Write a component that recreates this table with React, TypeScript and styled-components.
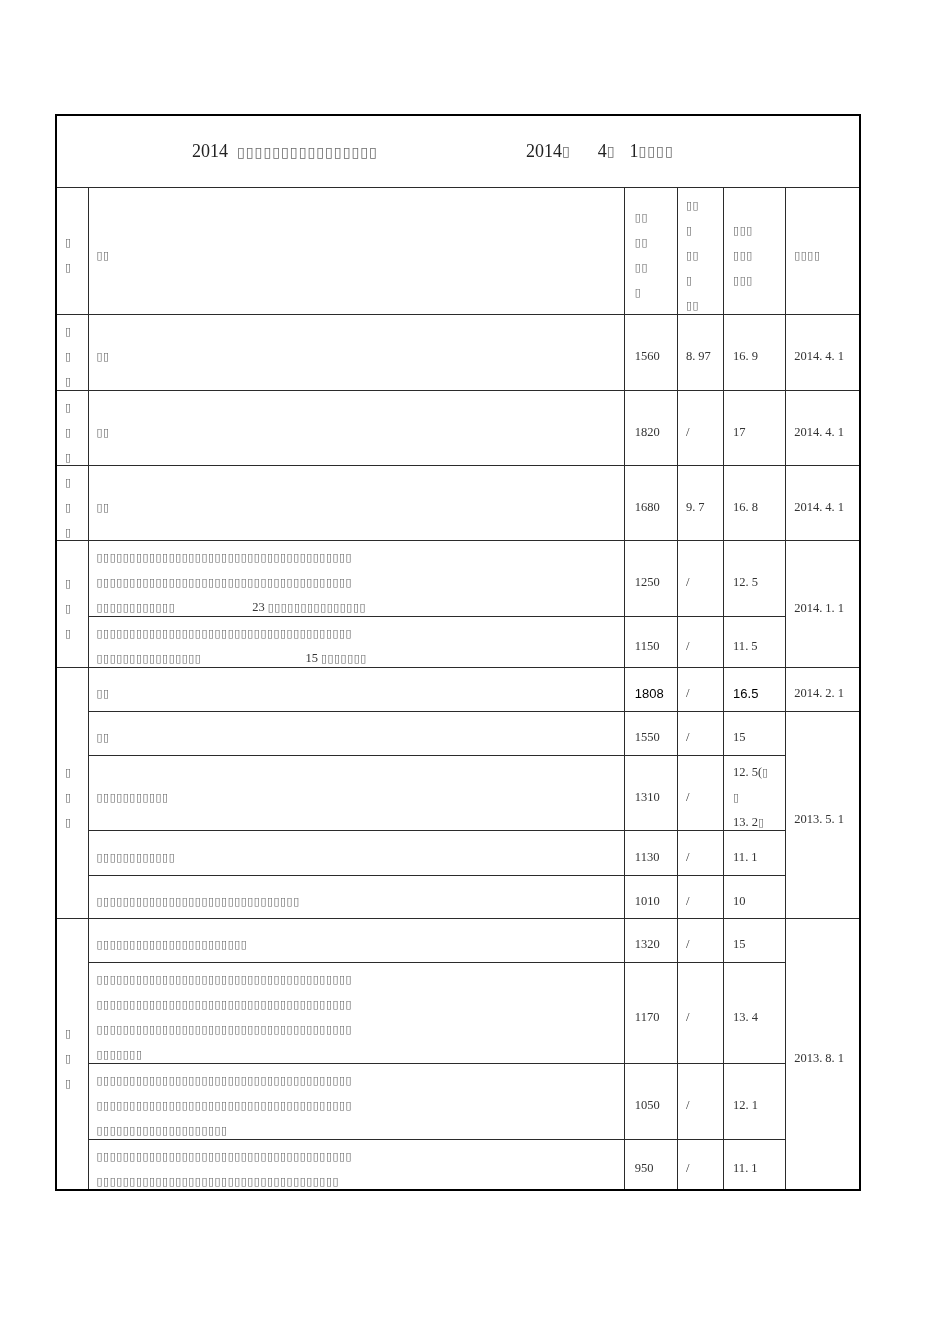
import React from 'react';
import styled, { createGlobalStyle } from 'styled-components';

const GlobalStyle = createGlobalStyle`
  html, body {
    margin: 0;
    padding: 0;
    background: #fff;
  }
  body {
    font-family: "Liberation Serif", "DejaVu Serif", serif;
    color: #333;
  }
`;

const Page = styled.div`
  width: 950px;
  min-height: 1344px;
  box-sizing: border-box;
  padding: 114px 0 0 55px;
  filter: grayscale(100%);
`;

const Sheet = styled.table`
  width: 806px;
  table-layout: fixed;
  border-collapse: collapse;
  border: 2px solid #000;
`;

const Row = styled.tr<{ $h: number }>`
  height: ${({ $h }) => $h}px;
`;

const Cell = styled.td<{ $pl?: number }>`
  border: 1px solid #2b2b2b;
  padding: 0 0 0 ${({ $pl }) => $pl ?? 8}px;
  vertical-align: middle;
  font-size: 12px;
  white-space: nowrap;
`;

const Lines = styled.div<{ $lh?: number }>`
  padding-top: 4px;
  margin-bottom: -5px;
  line-height: ${({ $lh }) => $lh ?? 25}px;
`;

const TitleBar = styled.div`
  display: flex;
  align-items: center;
  padding-left: 135px;
  font-size: 18px;
  color: #222;
`;

const TitleDate = styled.span`
  margin-left: 148px;
  display: inline-flex;
  align-items: center;
`;

const Tofu = styled.span<{ $big?: boolean }>`
  font-family: "DejaVu Sans", sans-serif;
  font-size: ${({ $big }) => ($big ? 14 : 11)}px;
  letter-spacing: ${({ $big }) => ($big ? 1.1 : 0.5)}px;
  color: #6a6a6a;
`;

const Spacer = styled.span<{ $w: number }>`
  display: inline-block;
  width: ${({ $w }) => $w}px;
`;

const Num = styled.span<{ $sans?: boolean }>`
  font-family: ${({ $sans }) =>
    $sans ? '"Liberation Sans", Arial, sans-serif' : '"Liberation Serif", serif'};
  font-size: ${({ $sans }) => ($sans ? 13 : 12.5)}px;
  color: ${({ $sans }) => ($sans ? '#000' : '#333')};
`;

const Dot = styled.span`
  margin-right: 3px;
`;

const B = '▯';
const t = (n: number) => B.repeat(n);

function Text({ children, big }: { children: string; big?: boolean }) {
  const parts = children.split(/(▯+)/).filter(Boolean);
  return (
    <>
      {parts.map((p, i) =>
        p[0] === B ? (
          <Tofu key={i} $big={big}>
            {p}
          </Tofu>
        ) : (
          <span key={i}>{p}</span>
        )
      )}
    </>
  );
}

function Value({ v, sans }: { v: string; sans?: boolean }) {
  if (sans) return <Num $sans>{v}</Num>;
  const parts = v.split('.');
  return (
    <Num>
      {parts.map((p, i) => (
        <React.Fragment key={i}>
          <Text>{p}</Text>
          {i < parts.length - 1 && <Dot>.</Dot>}
        </React.Fragment>
      ))}
    </Num>
  );
}

function Block({ lines, lh }: { lines: string[]; lh?: number }) {
  return (
    <Lines $lh={lh}>
      {lines.map((l, i) => (
        <div key={i}>
          <Text>{l}</Text>
        </div>
      ))}
    </Lines>
  );
}

function One({ children }: { children: React.ReactNode }) {
  return <Lines>{children}</Lines>;
}

function Figures({ a, b, c }: { a: string; b: string; c: string }) {
  return (
    <>
      <Cell $pl={10}>
        <One>
          <Value v={a} />
        </One>
      </Cell>
      <Cell>
        <One>
          <Value v={b} />
        </One>
      </Cell>
      <Cell $pl={9}>
        <One>
          <Value v={c} />
        </One>
      </Cell>
    </>
  );
}

const FULL = t(39);

export default function App() {
  return (
    <Page>
      <GlobalStyle />
      <Sheet>
        <colgroup>
          <col style={{ width: 32 }} />
          <col style={{ width: 535 }} />
          <col style={{ width: 53 }} />
          <col style={{ width: 46 }} />
          <col style={{ width: 62 }} />
          <col style={{ width: 74 }} />
        </colgroup>
        <tbody>
          <Row $h={72}>
            <Cell colSpan={6} $pl={0}>
              <TitleBar>
                <span>
                  <Text big>2014</Text>
                  <Spacer $w={9} />
                  <Text big>{t(16)}</Text>
                </span>
                <TitleDate>
                  <Text big>{`2014${B}`}</Text>
                  <Spacer $w={27} />
                  <Text big>{`4${B}`}</Text>
                  <Spacer $w={14} />
                  <Text big>{`1${t(4)}`}</Text>
                </TitleDate>
              </TitleBar>
            </Cell>
          </Row>

          <Row $h={127}>
            <Cell>
              <Block lines={[B, B]} />
            </Cell>
            <Cell>
              <Block lines={[t(2)]} />
            </Cell>
            <Cell $pl={10}>
              <Block lines={[t(2), t(2), t(2), B]} />
            </Cell>
            <Cell>
              <Block lines={[t(2), B, t(2), B, t(2)]} />
            </Cell>
            <Cell $pl={9}>
              <Block lines={[t(3), t(3), t(3)]} />
            </Cell>
            <Cell>
              <Block lines={[t(4)]} />
            </Cell>
          </Row>

          {[
            ['1560', '8.97', '16.9'],
            ['1820', '/', '17'],
            ['1680', '9.7', '16.8'],
          ].map(([a, b, c], i) => (
            <Row key={a} $h={i === 0 ? 76 : 75}>
              <Cell>
                <Block lines={[B, B, B]} />
              </Cell>
              <Cell>
                <Block lines={[t(2)]} />
              </Cell>
              <Figures a={a} b={b} c={c} />
              <Cell>
                <One>
                  <Value v="2014.4.1" />
                </One>
              </Cell>
            </Row>
          ))}

          <Row $h={76}>
            <Cell rowSpan={2}>
              <Block lines={[B, B, B]} />
            </Cell>
            <Cell>
              <Lines>
                <div>
                  <Text>{FULL}</Text>
                </div>
                <div>
                  <Text>{FULL}</Text>
                </div>
                <div>
                  <Text>{t(12)}</Text>
                  <Spacer $w={77} />
                  <Num>23</Num> <Text>{t(15)}</Text>
                </div>
              </Lines>
            </Cell>
            <Figures a="1250" b="/" c="12.5" />
            <Cell rowSpan={2}>
              <One>
                <Value v="2014.1.1" />
              </One>
            </Cell>
          </Row>
          <Row $h={51}>
            <Cell>
              <Lines>
                <div>
                  <Text>{FULL}</Text>
                </div>
                <div>
                  <Text>{t(16)}</Text>
                  <Spacer $w={104} />
                  <Num>15</Num> <Text>{t(7)}</Text>
                </div>
              </Lines>
            </Cell>
            <Figures a="1150" b="/" c="11.5" />
          </Row>

          <Row $h={44}>
            <Cell rowSpan={5}>
              <Block lines={[B, B, B]} />
            </Cell>
            <Cell>
              <Block lines={[t(2)]} />
            </Cell>
            <Cell $pl={10}>
              <One>
                <Value v="1808" sans />
              </One>
            </Cell>
            <Cell>
              <One>
                <Value v="/" />
              </One>
            </Cell>
            <Cell $pl={9}>
              <One>
                <Value v="16.5" sans />
              </One>
            </Cell>
            <Cell>
              <One>
                <Value v="2014.2.1" />
              </One>
            </Cell>
          </Row>
          <Row $h={44}>
            <Cell>
              <Block lines={[t(2)]} />
            </Cell>
            <Figures a="1550" b="/" c="15" />
            <Cell rowSpan={4}>
              <One>
                <Value v="2013.5.1" />
              </One>
            </Cell>
          </Row>
          <Row $h={75}>
            <Cell>
              <Block lines={[t(11)]} />
            </Cell>
            <Cell $pl={10}>
              <One>
                <Value v="1310" />
              </One>
            </Cell>
            <Cell>
              <One>
                <Value v="/" />
              </One>
            </Cell>
            <Cell $pl={9}>
              <Lines>
                <div>
                  <Value v="12.5" />
                  <Text>{`(${B}`}</Text>
                </div>
                <div>
                  <Text>{B}</Text>
                </div>
                <div>
                  <Value v="13.2" />
                  <Text>{B}</Text>
                </div>
              </Lines>
            </Cell>
          </Row>
          <Row $h={45}>
            <Cell>
              <Block lines={[t(12)]} />
            </Cell>
            <Figures a="1130" b="/" c="11.1" />
          </Row>
          <Row $h={43}>
            <Cell>
              <Block lines={[t(31)]} />
            </Cell>
            <Figures a="1010" b="/" c="10" />
          </Row>

          <Row $h={44}>
            <Cell rowSpan={4}>
              <Block lines={[B, B, B]} />
            </Cell>
            <Cell>
              <Block lines={[t(23)]} />
            </Cell>
            <Figures a="1320" b="/" c="15" />
            <Cell rowSpan={4}>
              <One>
                <Value v="2013.8.1" />
              </One>
            </Cell>
          </Row>
          <Row $h={101}>
            <Cell>
              <Block lines={[FULL, FULL, FULL, t(7)]} />
            </Cell>
            <Figures a="1170" b="/" c="13.4" />
          </Row>
          <Row $h={76}>
            <Cell>
              <Block lines={[FULL, FULL, t(20)]} />
            </Cell>
            <Figures a="1050" b="/" c="12.1" />
          </Row>
          <Row $h={50}>
            <Cell>
              <Block lines={[FULL, t(37)]} />
            </Cell>
            <Figures a="950" b="/" c="11.1" />
          </Row>
        </tbody>
      </Sheet>
    </Page>
  );
}
